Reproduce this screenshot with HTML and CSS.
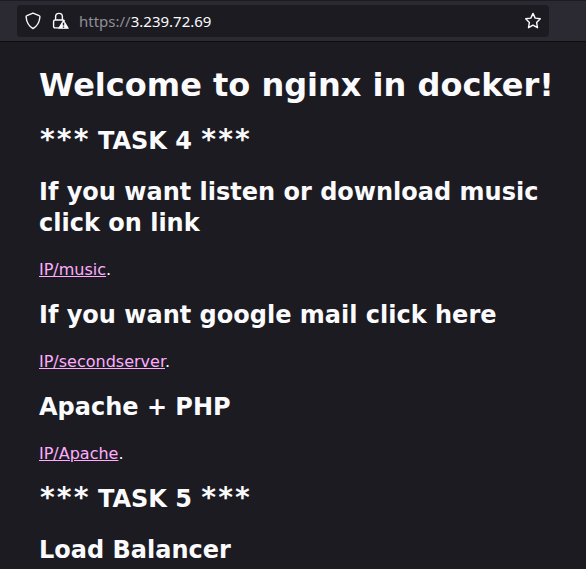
FILE: index.html
```html
<!DOCTYPE html>
<html lang="en">
<head>
<meta charset="utf-8">
<meta name="viewport" content="width=device-width, initial-scale=1">
<title>Welcome to nginx in docker!</title>
<link rel="stylesheet" href="styles.css">
</head>
<body>
<header class="toolbar">
  <form class="urlbar">
    <button class="icon-button" type="button" aria-label="Tracking protection">
      <svg width="16" height="18" viewBox="0 0 16 18" fill="none" stroke="currentColor" stroke-width="1.4" stroke-linejoin="round"><path d="M8 1.2 14.1 3.6C14.7 3.8 15 4.3 14.9 5 14.4 10.5 12 14.3 8 16.6 4 14.3 1.6 10.5 1.1 5 1 4.3 1.3 3.8 1.9 3.6Z"/></svg>
    </button>
    <button class="icon-button" type="button" aria-label="Connection is not secure">
      <svg width="17" height="18" viewBox="0 0 17 18" fill="none" stroke="currentColor" stroke-width="1.4"><path d="M3.6 8V4.8a3.4 3.4 0 0 1 6.8 0V8M7 15.9H3A1.4 1.4 0 0 1 1.6 14.5V9.4A1.4 1.4 0 0 1 3 8H11A1.4 1.4 0 0 1 12.4 9"/><path d="M11.5 8.6 16.2 16.2H6.8Z" fill="currentColor" stroke-width="1.1" stroke-linejoin="round"/><path class="mark" d="M11.5 10.8V13.6M11.5 14.6V15.8"/></svg>
    </button>
    <label class="scheme" for="address">https://</label>
    <input class="address" id="address" type="text" value="3.239.72.69" spellcheck="false">
    <button class="icon-button" type="button" aria-label="Bookmark this page">
      <svg width="18" height="18" viewBox="0 0 18 18" fill="none" stroke="currentColor" stroke-width="1.4" stroke-linejoin="round"><path d="M9 1.4 11.2 6.1 16.3 6.8 12.6 10.4 13.5 15.7 9 13.2 4.5 15.7 5.4 10.4 1.7 6.8 6.8 6.1Z"/></svg>
    </button>
  </form>
</header>
<main class="page">
  <h1>Welcome to nginx in docker!</h1>
  <h2><span class="stars">***</span> TASK 4 <span class="stars">***</span></h2>
  <h2>If you want listen or download music click on link</h2>
  <p><a href="/music">IP/music</a>.</p>
  <h2>If you want google mail click here</h2>
  <p><a href="/secondserver">IP/secondserver</a>.</p>
  <h2>Apache + PHP</h2>
  <p><a href="/Apache">IP/Apache</a>.</p>
  <h2><span class="stars">***</span> TASK 5 <span class="stars">***</span></h2>
  <h2>Load Balancer</h2>
</main>
</body>
</html>
```
FILE: styles.css
```css
* {
  box-sizing: border-box;
}

body {
  margin: 0;
  background: #1c1b22;
  color: #fbfbfe;
  font: 16px/21px Verdana, "DejaVu Sans", sans-serif;
}

.toolbar {
  padding: 4px 37px 4px 17px;
  border-top: 1px solid #1c1b22;
  border-bottom: 1px solid #0c0c0d;
  background: #2b2a33;
}

.urlbar {
  display: flex;
  align-items: center;
  height: 32px;
  padding: 0 7px;
  border-radius: 4px;
  background: #1c1b22;
  font: 15px/20px "Noto Sans", sans-serif;
}

.icon-button {
  display: flex;
  align-items: center;
  justify-content: center;
  width: 18px;
  height: 24px;
  padding: 0;
  border: 0;
  background: none;
  color: #fbfbfe;
}

.icon-button + .icon-button {
  margin-left: 9px;
}

.mark {
  stroke: #1c1b22;
}

.scheme {
  margin-left: 10px;
  color: #8f8f96;
}

.address {
  flex: 1;
  min-width: 0;
  padding: 0;
  border: 0;
  outline: 0;
  background: none;
  color: #fbfbfe;
  font: inherit;
}

.page {
  max-width: 640px;
  padding: 24px 32px 0 39px;
}

h1 {
  margin: 0 0 21px;
  font-size: 32px;
  line-height: 39px;
}

h2 {
  margin: 20px 0;
  font-size: 24px;
  line-height: 31px;
}

.stars {
  font-family: "DejaVu Sans Mono", monospace;
  font-size: 28px;
  line-height: 1;
}

p {
  margin: 16px 0;
}

a {
  color: #ffadff;
}
```
